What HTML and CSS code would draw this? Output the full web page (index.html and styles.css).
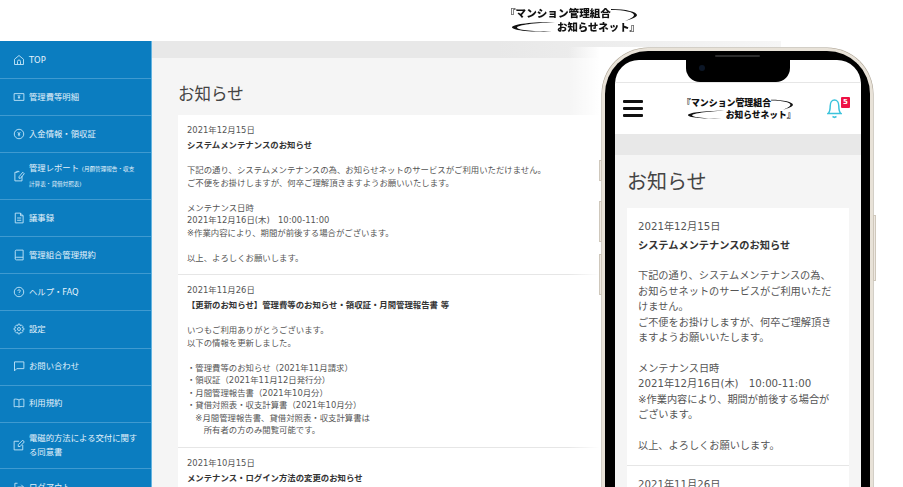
FILE: index.html
```html
<!DOCTYPE html>
<html lang="ja">
<head>
    <meta charset="UTF-8">
    <title>お知らせ</title>
    <link rel="stylesheet" href="styles.css">
</head>
<body>
    <header class="top-header">
        <div class="logo">
            <svg class="logo-swoosh" viewBox="0 0 132 26"><path d="M103 2 C118 2 129 5 129 8 C129 10 124 12 117 14 C122 12 126 10 126 8 C126 5 116 3 103 3 Z M47 15 C24 15 6 17 4 20 C3 23 20 25 44 25 C22 24 9 23 9 20.5 C10 18 26 16 47 15 Z"/></svg>
            <span class="logo-line1">『マンション管理組合</span>
            <span class="logo-line2">お知らせネット』</span>
        </div>
    </header>

    <div class="wrapper">
        <nav class="sidebar">
            <a class="nav-item"><svg class="nav-icon" viewBox="0 0 16 16"><path d="M2 14 V7 L8 2 L14 7 V14 Z M6 14 V10 A2 2 0 0 1 10 10 V14"/></svg><span>TOP</span></a>
            <a class="nav-item"><svg class="nav-icon" viewBox="0 0 16 16"><path d="M1.5 3.5 H14.5 V12.5 H1.5 Z M6.5 5.5 L8 7.5 L9.5 5.5 M8 7.5 V10.5 M6.5 8.5 H9.5"/></svg><span>管理費等明細</span></a>
            <a class="nav-item"><svg class="nav-icon" viewBox="0 0 16 16"><circle cx="8" cy="8" r="6.3"/><path d="M6.3 5.5 L8 8 L9.7 5.5 M8 8 V11 M6.5 9 H9.5"/></svg><span>入金情報・領収証</span></a>
            <a class="nav-item nav-item-tall"><svg class="nav-icon" viewBox="0 0 16 16"><path d="M6 3 H2.5 V14.5 H12 V8 M5 3 V1.8 H8 V3 M13 3 L8 9 V11 H10 L15 5 Z"/></svg><span>管理レポート <small>(月額管理報告・収支計算表・貸借対照表)</small></span></a>
            <a class="nav-item"><svg class="nav-icon" viewBox="0 0 16 16"><path d="M3 1.5 H10 L13.5 5 V14.5 H3 Z M10 1.5 V5 H13.5 M5.5 8 H11 M5.5 11 H11"/></svg><span>議事録</span></a>
            <a class="nav-item"><svg class="nav-icon" viewBox="0 0 16 16"><path d="M4.5 1.5 H13.5 V14.5 H4.5 C3 14.5 3 13.5 3 12.5 V3 C3 2 3.5 1.5 4.5 1.5 M3 12.5 C3 11.5 4 11 4.5 11 H13.5"/></svg><span>管理組合管理規約</span></a>
            <a class="nav-item"><svg class="nav-icon" viewBox="0 0 16 16"><circle cx="8" cy="8" r="6.3"/><path d="M6.3 6.5 C6.3 4.5 9.8 4.5 9.8 6.5 C9.8 8 8 7.8 8 9.3 M8 10.8 V11.5"/></svg><span>ヘルプ・FAQ</span></a>
            <a class="nav-item"><svg class="nav-icon" viewBox="0 0 16 16"><circle cx="8" cy="8" r="2"/><path d="M6.8 1.5 H9.2 L9.6 3.6 L11.4 2.8 L13.2 4.6 L12.3 6.3 L14.5 6.8 V9.2 L12.3 9.7 L13.2 11.4 L11.4 13.2 L9.7 12.3 L9.2 14.5 H6.8 L6.3 12.3 L4.6 13.2 L2.8 11.4 L3.7 9.7 L1.5 9.2 V6.8 L3.7 6.3 L2.8 4.6 L4.6 2.8 L6.3 3.7 Z"/></svg><span>設定</span></a>
            <a class="nav-item"><svg class="nav-icon" viewBox="0 0 16 16"><path d="M2 2.5 H14.5 V11.5 H5 L2 14.5 Z"/></svg><span>お問い合わせ</span></a>
            <a class="nav-item"><svg class="nav-icon" viewBox="0 0 16 16"><path d="M8 4 C6.5 3 4 2.5 1.5 3 V13 C4 12.5 6.5 12.5 8 13.5 C9.5 12.5 12 12.5 14.5 13 V3 C12 2.5 9.5 3 8 4 Z M8 4 V13.5"/></svg><span>利用規約</span></a>
            <a class="nav-item nav-item-tall"><svg class="nav-icon" viewBox="0 0 16 16"><path d="M8 3 H1.5 V14.5 H13 V8 M13 1.5 L7 7.5 V10 H9.5 L15 4 Z"/></svg><span>電磁的方法による交付に関する同意書</span></a>
            <a class="nav-item"><svg class="nav-icon" viewBox="0 0 16 16"><path d="M6 3 H2.5 V13 H6 M6 8 H14 M11 5 L14 8 L11 11"/></svg><span>ログアウト</span></a>
        </nav>

        <main class="content">
            <div class="content-bar"></div>
            <h1 class="page-title">お知らせ</h1>
            <div class="news-list">
                <article class="news-item">
                    <p>2021年12月15日</p>
                    <p class="news-title">システムメンテナンスのお知らせ</p>
                    <p class="news-body">下記の通り、システムメンテナンスの為、お知らせネットのサービスがご利用いただけません。<br>ご不便をお掛けしますが、何卒ご理解頂きますようお願いいたします。<br><br>メンテナンス日時<br>2021年12月16日(木)　10:00-11:00<br>※作業内容により、期間が前後する場合がございます。<br><br>以上、よろしくお願いします。</p>
                </article>
                <article class="news-item">
                    <p>2021年11月26日</p>
                    <p class="news-title">【更新のお知らせ】管理費等のお知らせ・領収証・月間管理報告書 等</p>
                    <p class="news-body">いつもご利用ありがとうございます。<br>以下の情報を更新しました。<br><br>・管理費等のお知らせ（2021年11月請求）<br>・領収証（2021年11月12日発行分）<br>・月間管理報告書（2021年10月分）<br>・貸借対照表・収支計算書（2021年10月分）<br>　※月間管理報告書、貸借対照表・収支計算書は<br>　　所有者の方のみ閲覧可能です。</p>
                </article>
                <article class="news-item">
                    <p>2021年10月15日</p>
                    <p class="news-title">メンテナンス・ログイン方法の変更のお知らせ</p>
                </article>
            </div>
        </main>
    </div>

    <div class="halo"></div>

    <div class="phone">
        <span class="phone-btn phone-btn-1"></span>
        <span class="phone-btn phone-btn-2"></span>
        <span class="phone-btn phone-btn-3"></span>
        <span class="phone-btn phone-btn-4"></span>
        <div class="phone-screen">
            <div class="phone-status"></div>
            <div class="phone-header">
                <div class="hamburger"><i></i><i></i><i></i></div>
                <div class="logo logo-small">
                    <svg class="logo-swoosh" viewBox="0 0 132 26"><path d="M103 2 C118 2 129 5 129 8 C129 10 124 12 117 14 C122 12 126 10 126 8 C126 5 116 3 103 3 Z M47 15 C24 15 6 17 4 20 C3 23 20 25 44 25 C22 24 9 23 9 20.5 C10 18 26 16 47 15 Z"/></svg>
                    <span class="logo-line1">『マンション管理組合</span>
                    <span class="logo-line2">お知らせネット』</span>
                </div>
                <div class="bell">
                    <svg viewBox="0 0 15 20"><path d="M1 14.5 C3 13 3.2 10 3.2 7 C3.2 3.5 5 1 7.5 1 C10 1 11.8 3.5 11.8 7 C11.8 10 12 13 14 14.5 Z"/><path d="M5.5 17.5 L7.5 18.5 L9.5 17.5"/></svg>
                    <span class="bell-badge">5</span>
                </div>
            </div>
            <div class="phone-bar"></div>
            <div class="phone-content">
                <h2 class="phone-title">お知らせ</h2>
                <article class="phone-card">
                    <p>2021年12月15日</p>
                    <p class="news-title">システムメンテナンスのお知らせ</p>
                    <p class="news-body">下記の通り、システムメンテナンスの為、お知らせネットのサービスがご利用いただけません。<br>ご不便をお掛けしますが、何卒ご理解頂きますようお願いいたします。<br><br>メンテナンス日時<br>2021年12月16日(木)　10:00-11:00<br>※作業内容により、期間が前後する場合がございます。<br><br>以上、よろしくお願いします。</p>
                </article>
                <article class="phone-card">
                    <p>2021年11月26日</p>
                </article>
            </div>
        </div>
        <div class="notch"><span class="speaker"></span><span class="camera"></span></div>
    </div>
</body>
</html>
```

FILE: styles.css
```css
body {
    margin: 0;
    height: 487px;
    overflow: hidden;
    background-color: #fff;
    color: #555;
    font-family: "DejaVu Sans", "Noto Sans CJK JP", sans-serif;
    position: relative;
    filter: blur(0.3px);
}

p, h1, h2 {
    margin: 0;
    font-weight: normal;
}

.top-header {
    height: 41px;
    box-sizing: border-box;
    padding: 7px 0 0 508px;
}

/* logo */
.logo {
    position: relative;
    width: 132px;
    height: 26px;
    color: #111;
    font-family: "Noto Sans CJK JP", sans-serif;
    font-weight: 900;
    font-size: 10.6px;
    line-height: 13px;
    white-space: nowrap;
}

.logo-swoosh {
    position: absolute;
    inset: 0;
    width: 100%;
    height: 100%;
    fill: #111;
}

.logo-line1, .logo-line2 {
    position: absolute;
}

.logo-line1 {
    left: -3px;
    top: -1px;
}

.logo-line2 {
    left: 49px;
    top: 13px;
    font-size: 10.4px;
}

.logo-small {
    margin-left: 9px;
    transform: scale(0.84);
}

/* layout */
.wrapper {
    display: flex;
    height: 446px;
}

.sidebar {
    width: 152px;
    flex-shrink: 0;
    padding-top: 1px;
    background-color: #0b7dc0;
    border-right: 1px solid #63b3e0;
    box-sizing: border-box;
    overflow: hidden;
}

.nav-item {
    display: flex;
    align-items: center;
    gap: 4px;
    height: 37.15px;
    box-sizing: border-box;
    padding: 0 0 1px 13px;
    border-bottom: 1px solid #3f9ad0;
    color: #e4f2fb;
    font-size: 8.35px;
    line-height: 14px;
}

.nav-item span {
    max-width: 110px;
}

.nav-item-tall {
    height: 46.6px;
}

.nav-item small {
    font-size: 5.6px;
}

.nav-icon {
    width: 12px;
    height: 12px;
    flex-shrink: 0;
    fill: none;
    stroke: #c4e5f8;
    stroke-width: 1.2;
}

.content {
    width: 629px;
    background-color: #f5f5f5;
}

.content-bar {
    height: 17px;
    background: linear-gradient(to right, #e8e8e8 55%, #f6f6f6);
}

.page-title {
    font-size: 16.5px;
    line-height: 24px;
    margin: 25px 0 8px 26px;
    color: #444;
}

.news-item {
    margin-left: 26px;
    padding: 9px 9px 10px;
    background-color: #fff;
    border-bottom: 1px solid #e6e6e6;
    font-size: 8.4px;
    line-height: 12.5px;
    width: 412px;
}

.news-title {
    font-weight: bold;
    color: #333;
    margin: 2.5px 0 12.5px;
}

/* soft white glow around the phone */
.halo {
    position: absolute;
    left: 568px;
    top: 47px;
    width: 335px;
    height: 440px;
    background: linear-gradient(to right, rgba(255,255,255,0), #fff 32px);
}

/* phone mockup */
.phone {
    position: absolute;
    left: 602px;
    top: 48px;
    width: 271px;
    height: 439px;
    box-sizing: border-box;
    border: 3px solid #e8e2d8;
    border-bottom: none;
    border-radius: 46px 46px 0 0;
    box-shadow: 0 0 0 0.5px #a89f90;
    background-color: #000;
    padding: 9px 9px 0 10px;
}

.phone-btn {
    position: absolute;
    width: 3px;
    box-sizing: border-box;
    border: 1px solid #cfc8bc;
    background-color: #efe9e2;
}

.phone-btn-1 { left: -6px; top: 109px; height: 21px; }
.phone-btn-2 { left: -6px; top: 150px; height: 41px; }
.phone-btn-3 { left: -6px; top: 203px; height: 41px; }
.phone-btn-4 { right: -6px; top: 164px; height: 66px; }

.phone-screen {
    height: 100%;
    background-color: #fff;
    border-radius: 24px 24px 0 0;
    overflow: hidden;
}

.notch {
    position: absolute;
    left: 81px;
    top: 9px;
    width: 104px;
    height: 22px;
    background-color: #000;
    border-radius: 0 0 14px 14px;
}

.speaker {
    position: absolute;
    left: 29px;
    top: -5px;
    width: 45px;
    height: 1.5px;
    border-radius: 1px;
    background-color: #2c2c2c;
}

.camera {
    position: absolute;
    left: 13px;
    top: 5px;
    width: 6px;
    height: 6px;
    border-radius: 50%;
    background-color: #0c1626;
}

.phone-status {
    height: 22px;
    border-bottom: 1px solid #e6e6e6;
}

.phone-header {
    height: 51px;
    display: flex;
    align-items: center;
    justify-content: space-between;
    padding: 0 19px 0 8px;
}

.hamburger {
    display: flex;
    flex-direction: column;
    gap: 4px;
    width: 20px;
}

.hamburger i {
    height: 3px;
    background-color: #111;
    border-radius: 1px;
}

.bell {
    position: relative;
    width: 15px;
    height: 20px;
}

.bell svg {
    display: block;
    width: 100%;
    height: 100%;
    fill: none;
    stroke: #3bc3dc;
    stroke-width: 1.5;
}

.bell-badge {
    position: absolute;
    right: -8px;
    top: -2px;
    width: 9px;
    height: 11px;
    border-radius: 1px;
    background-color: #ee1144;
    color: #fff;
    font-size: 7px;
    font-weight: bold;
    line-height: 11px;
    text-align: center;
}

.phone-bar {
    height: 21px;
    background-color: #e8e8e8;
}

.phone-content {
    background-color: #f5f5f5;
    padding: 14px 12px 0;
}

.phone-title {
    font-size: 20px;
    line-height: 26px;
    color: #444;
    margin-bottom: 13px;
}

.phone-card {
    background-color: #fff;
    border-bottom: 1px solid #e6e6e6;
    padding: 11px 11px 12px;
    font-size: 10.2px;
    line-height: 15.4px;
}

.phone-card .news-title {
    margin: 4px 0 14.5px;
}
```
